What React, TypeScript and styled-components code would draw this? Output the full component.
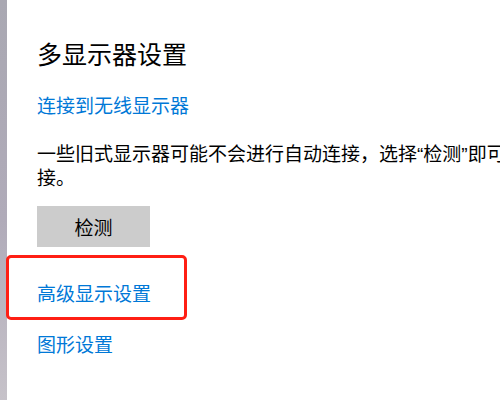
import React from "react"
import styled, { createGlobalStyle } from "styled-components"

const GlobalStyle = createGlobalStyle`
  html, body {
    margin: 0;
    padding: 0;
    background: #ffffff;
    overflow: hidden;
  }
  body {
    font-family: "Liberation Sans", "Noto Sans CJK SC", sans-serif;
  }
`

const Page = styled.div`
  display: flex;
  width: 500px;
  height: 400px;
  overflow: hidden;
`

const SideEdge = styled.div`
  flex: 0 0 7px;
  background: linear-gradient(#a9a8b2, #b0abb9 55%, #c6c2c9);
`

const Content = styled.main`
  display: flex;
  flex-direction: column;
  align-items: flex-start;
  padding: 39px 0 0 30px;
  width: 500px;
  flex-shrink: 0;
`

const Heading = styled.h2`
  margin: 0;
  font-size: 25px;
  line-height: 32px;
  font-weight: 400;
  color: #000;
`

const Link = styled.a<{ $gap: number }>`
  display: block;
  margin-top: ${(p) => p.$gap}px;
  font-size: 19px;
  line-height: 28px;
  color: #0078d7;
  text-decoration: none;
  cursor: pointer;
`

const Note = styled.p`
  margin: 22px 0 0;
  width: 490px;
  font-size: 19px;
  line-height: 24px;
  color: #000;
`

const DetectButton = styled.button`
  margin-top: 15px;
  width: 113px;
  height: 41px;
  border: none;
  background: #cccccc;
  font-family: inherit;
  font-size: 19px;
  color: #000;
  padding: 0;
`

const Marked = styled.div`
  position: relative;
  margin-top: 34px;
`

// red annotation frame drawn over the screenshot
const Frame = styled.span`
  position: absolute;
  left: -31px;
  top: -26px;
  width: 181px;
  height: 65px;
  box-sizing: border-box;
  border: 3px solid #ff1f14;
  border-radius: 5px;
  pointer-events: none;
`

export default function App() {
  return (
    <>
      <GlobalStyle />
      <Page>
        <SideEdge />
        <Content>
          <Heading>多显示器设置</Heading>
          <Link $gap={22}>连接到无线显示器</Link>
          <Note>一些旧式显示器可能不会进行自动连接，选择“检测”即可连接。</Note>
          <DetectButton>检测</DetectButton>
          <Marked>
            <Link $gap={0}>高级显示设置</Link>
            <Frame />
          </Marked>
          <Link $gap={23}>图形设置</Link>
        </Content>
      </Page>
    </>
  )
}
